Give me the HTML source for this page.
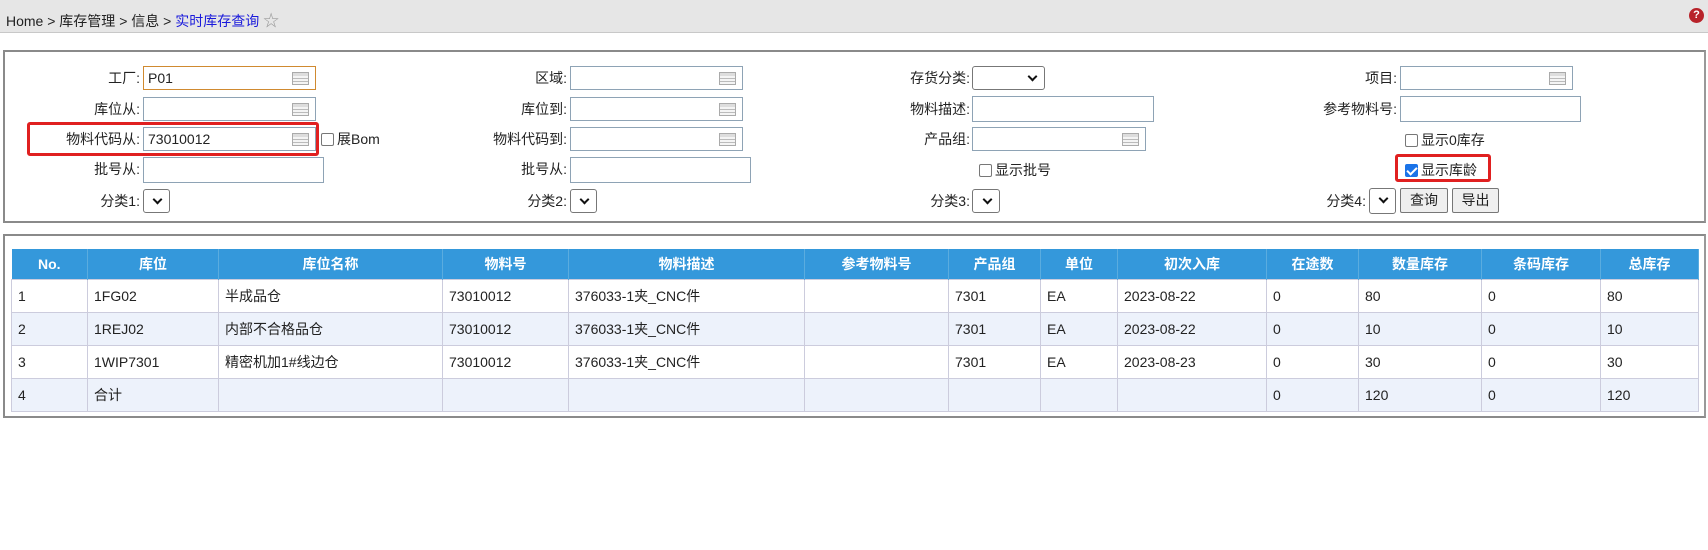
<!DOCTYPE html>
<html><head><meta charset="utf-8"><style>
*{box-sizing:border-box;margin:0;padding:0}
body{width:1708px;height:550px;background:#fff;font-family:"Liberation Sans","Noto Sans CJK SC",sans-serif;font-size:14px;color:#222;position:relative;overflow:hidden}
.bar{position:absolute;left:0;top:0;width:1708px;height:33px;background:#e6e6e6;border-bottom:1px solid #c8c8c8}
.bc{position:absolute;left:6px;top:7px;font-size:14px}
.bc a{color:#1a1adb}
.help{position:absolute;left:1689px;top:8px;width:15px;height:15px;border-radius:50%;background:#b8232a;color:#fff;font-size:11px;font-weight:bold;text-align:center;line-height:15px}
.box{position:absolute;border:2px solid #8a8a8a;border-right-color:#999}
.lbl{position:absolute;text-align:right;height:24px;line-height:24px;font-size:14px}
.inp{position:absolute;height:24px;border:1px solid #8ea3b5;background:#fff;padding-left:4px;line-height:22px;font-size:14px}
.ic{position:absolute;right:6px;top:5px;width:17px;height:13px;border:1px solid #aaa;background:linear-gradient(#ddd 0 3px,#f4f4f4 3px 5px,#bbb 5px 6px,#f4f4f4 6px 8px,#bbb 8px 9px,#f4f4f4 9px)}
.sel{position:absolute;height:24px;border:1px solid #777;border-radius:3px;background:#fff}
.sel:after{content:"";position:absolute;right:8px;top:6px;width:5px;height:5px;border-right:2px solid #111;border-bottom:2px solid #111;transform:rotate(45deg)}
.cb{position:absolute;height:24px;line-height:24px;font-size:14px}
.cb i{display:inline-block;width:13px;height:13px;border:1px solid #777;border-radius:2px;vertical-align:-2px;margin-right:3px;background:#fff}
.cb i.on{background:#1a73e8;border-color:#1a73e8;position:relative}
.cb i.on:after{content:"";position:absolute;left:3px;top:0px;width:4px;height:8px;border-right:2px solid #fff;border-bottom:2px solid #fff;transform:rotate(45deg)}
.btn{position:absolute;height:25px;border:1px solid #777;border-radius:2px;background:#efefef;text-align:center;line-height:23px;font-size:14px}
.red{position:absolute;border:3px solid #e02020;border-radius:3px}
table{position:absolute;left:11px;top:249px;border-collapse:collapse;table-layout:fixed;width:1687px}
th{background:#3498db;color:#fff;font-weight:bold;height:30px;font-size:14px;border-right:1px solid #5aacdf}
td{height:33px;border:1px solid #ccd;padding-left:6px;font-size:14px}
tr:nth-child(odd) td{background:#edf2fb}
</style></head><body>
<div class="bar"><div class="bc">Home &gt; 库存管理 &gt; 信息 &gt; <a>实时库存查询</a> <span style="color:#999;font-size:16px">☆</span></div><div class="help">?</div></div>

<div class="box" style="left:3px;top:50px;width:1703px;height:173px"></div>

<div class="lbl" style="left:0;width:140px;top:66px">工厂:</div>
<div class="inp" style="left:143px;top:66px;width:173px;border-color:#d08a30">P01<div class="ic"></div></div>
<div class="lbl" style="left:0;width:140px;top:97px">库位从:</div>
<div class="inp" style="left:143px;top:97px;width:173px"><div class="ic"></div></div>
<div class="lbl" style="left:0;width:140px;top:127px">物料代码从:</div>
<div class="inp" style="left:143px;top:127px;width:173px">73010012<div class="ic"></div></div>
<div class="red" style="left:27px;top:122px;width:292px;height:34px"></div>
<div class="cb" style="left:321px;top:127px"><i></i>展Bom</div>
<div class="lbl" style="left:0;width:140px;top:157px">批号从:</div>
<div class="inp" style="left:143px;top:157px;width:181px;height:26px"></div>
<div class="lbl" style="left:0;width:140px;top:189px">分类1:</div>
<div class="sel" style="left:143px;top:189px;width:27px"></div>

<div class="lbl" style="left:400px;width:167px;top:66px">区域:</div>
<div class="inp" style="left:570px;top:66px;width:173px"><div class="ic"></div></div>
<div class="lbl" style="left:400px;width:167px;top:97px">库位到:</div>
<div class="inp" style="left:570px;top:97px;width:173px"><div class="ic"></div></div>
<div class="lbl" style="left:400px;width:167px;top:127px">物料代码到:</div>
<div class="inp" style="left:570px;top:127px;width:173px"><div class="ic"></div></div>
<div class="lbl" style="left:400px;width:167px;top:157px">批号从:</div>
<div class="inp" style="left:570px;top:157px;width:181px;height:26px"></div>
<div class="lbl" style="left:400px;width:167px;top:189px">分类2:</div>
<div class="sel" style="left:570px;top:189px;width:27px"></div>

<div class="lbl" style="left:800px;width:170px;top:66px">存货分类:</div>
<div class="sel" style="left:972px;top:66px;width:73px"></div>
<div class="lbl" style="left:800px;width:170px;top:97px">物料描述:</div>
<div class="inp" style="left:972px;top:96px;width:182px;height:26px"></div>
<div class="lbl" style="left:800px;width:170px;top:127px">产品组:</div>
<div class="inp" style="left:972px;top:127px;width:174px"><div class="ic"></div></div>
<div class="cb" style="left:979px;top:158px"><i></i>显示批号</div>
<div class="lbl" style="left:800px;width:170px;top:189px">分类3:</div>
<div class="sel" style="left:972px;top:189px;width:28px"></div>

<div class="lbl" style="left:1200px;width:197px;top:66px">项目:</div>
<div class="inp" style="left:1400px;top:66px;width:173px"><div class="ic"></div></div>
<div class="lbl" style="left:1200px;width:197px;top:97px">参考物料号:</div>
<div class="inp" style="left:1400px;top:96px;width:181px;height:26px"></div>
<div class="cb" style="left:1405px;top:128px"><i></i>显示0库存</div>
<div class="cb" style="left:1405px;top:158px"><i class="on"></i>显示库龄</div>
<div class="red" style="left:1395px;top:154px;width:96px;height:28px"></div>
<div class="lbl" style="left:1200px;width:166px;top:189px">分类4:</div>
<div class="sel" style="left:1369px;top:188px;width:27px;height:26px"></div>
<div class="btn" style="left:1400px;top:188px;width:48px">查询</div>
<div class="btn" style="left:1452px;top:188px;width:47px">导出</div>

<div class="box" style="left:3px;top:234px;width:1703px;height:184px"></div>
<table>
<colgroup><col style="width:76px"><col style="width:131px"><col style="width:224px"><col style="width:126px"><col style="width:236px"><col style="width:144px"><col style="width:92px"><col style="width:77px"><col style="width:149px"><col style="width:92px"><col style="width:123px"><col style="width:119px"><col style="width:98px"></colgroup>
<tr><th>No.</th><th>库位</th><th>库位名称</th><th>物料号</th><th>物料描述</th><th>参考物料号</th><th>产品组</th><th>单位</th><th>初次入库</th><th>在途数</th><th>数量库存</th><th>条码库存</th><th>总库存</th></tr>
<tr><td>1</td><td>1FG02</td><td>半成品仓</td><td>73010012</td><td>376033-1夹_CNC件</td><td></td><td>7301</td><td>EA</td><td>2023-08-22</td><td>0</td><td>80</td><td>0</td><td>80</td></tr>
<tr><td>2</td><td>1REJ02</td><td>内部不合格品仓</td><td>73010012</td><td>376033-1夹_CNC件</td><td></td><td>7301</td><td>EA</td><td>2023-08-22</td><td>0</td><td>10</td><td>0</td><td>10</td></tr>
<tr><td>3</td><td>1WIP7301</td><td>精密机加1#线边仓</td><td>73010012</td><td>376033-1夹_CNC件</td><td></td><td>7301</td><td>EA</td><td>2023-08-23</td><td>0</td><td>30</td><td>0</td><td>30</td></tr>
<tr><td>4</td><td>合计</td><td></td><td></td><td></td><td></td><td></td><td></td><td></td><td>0</td><td>120</td><td>0</td><td>120</td></tr>
</table>
</body></html>
